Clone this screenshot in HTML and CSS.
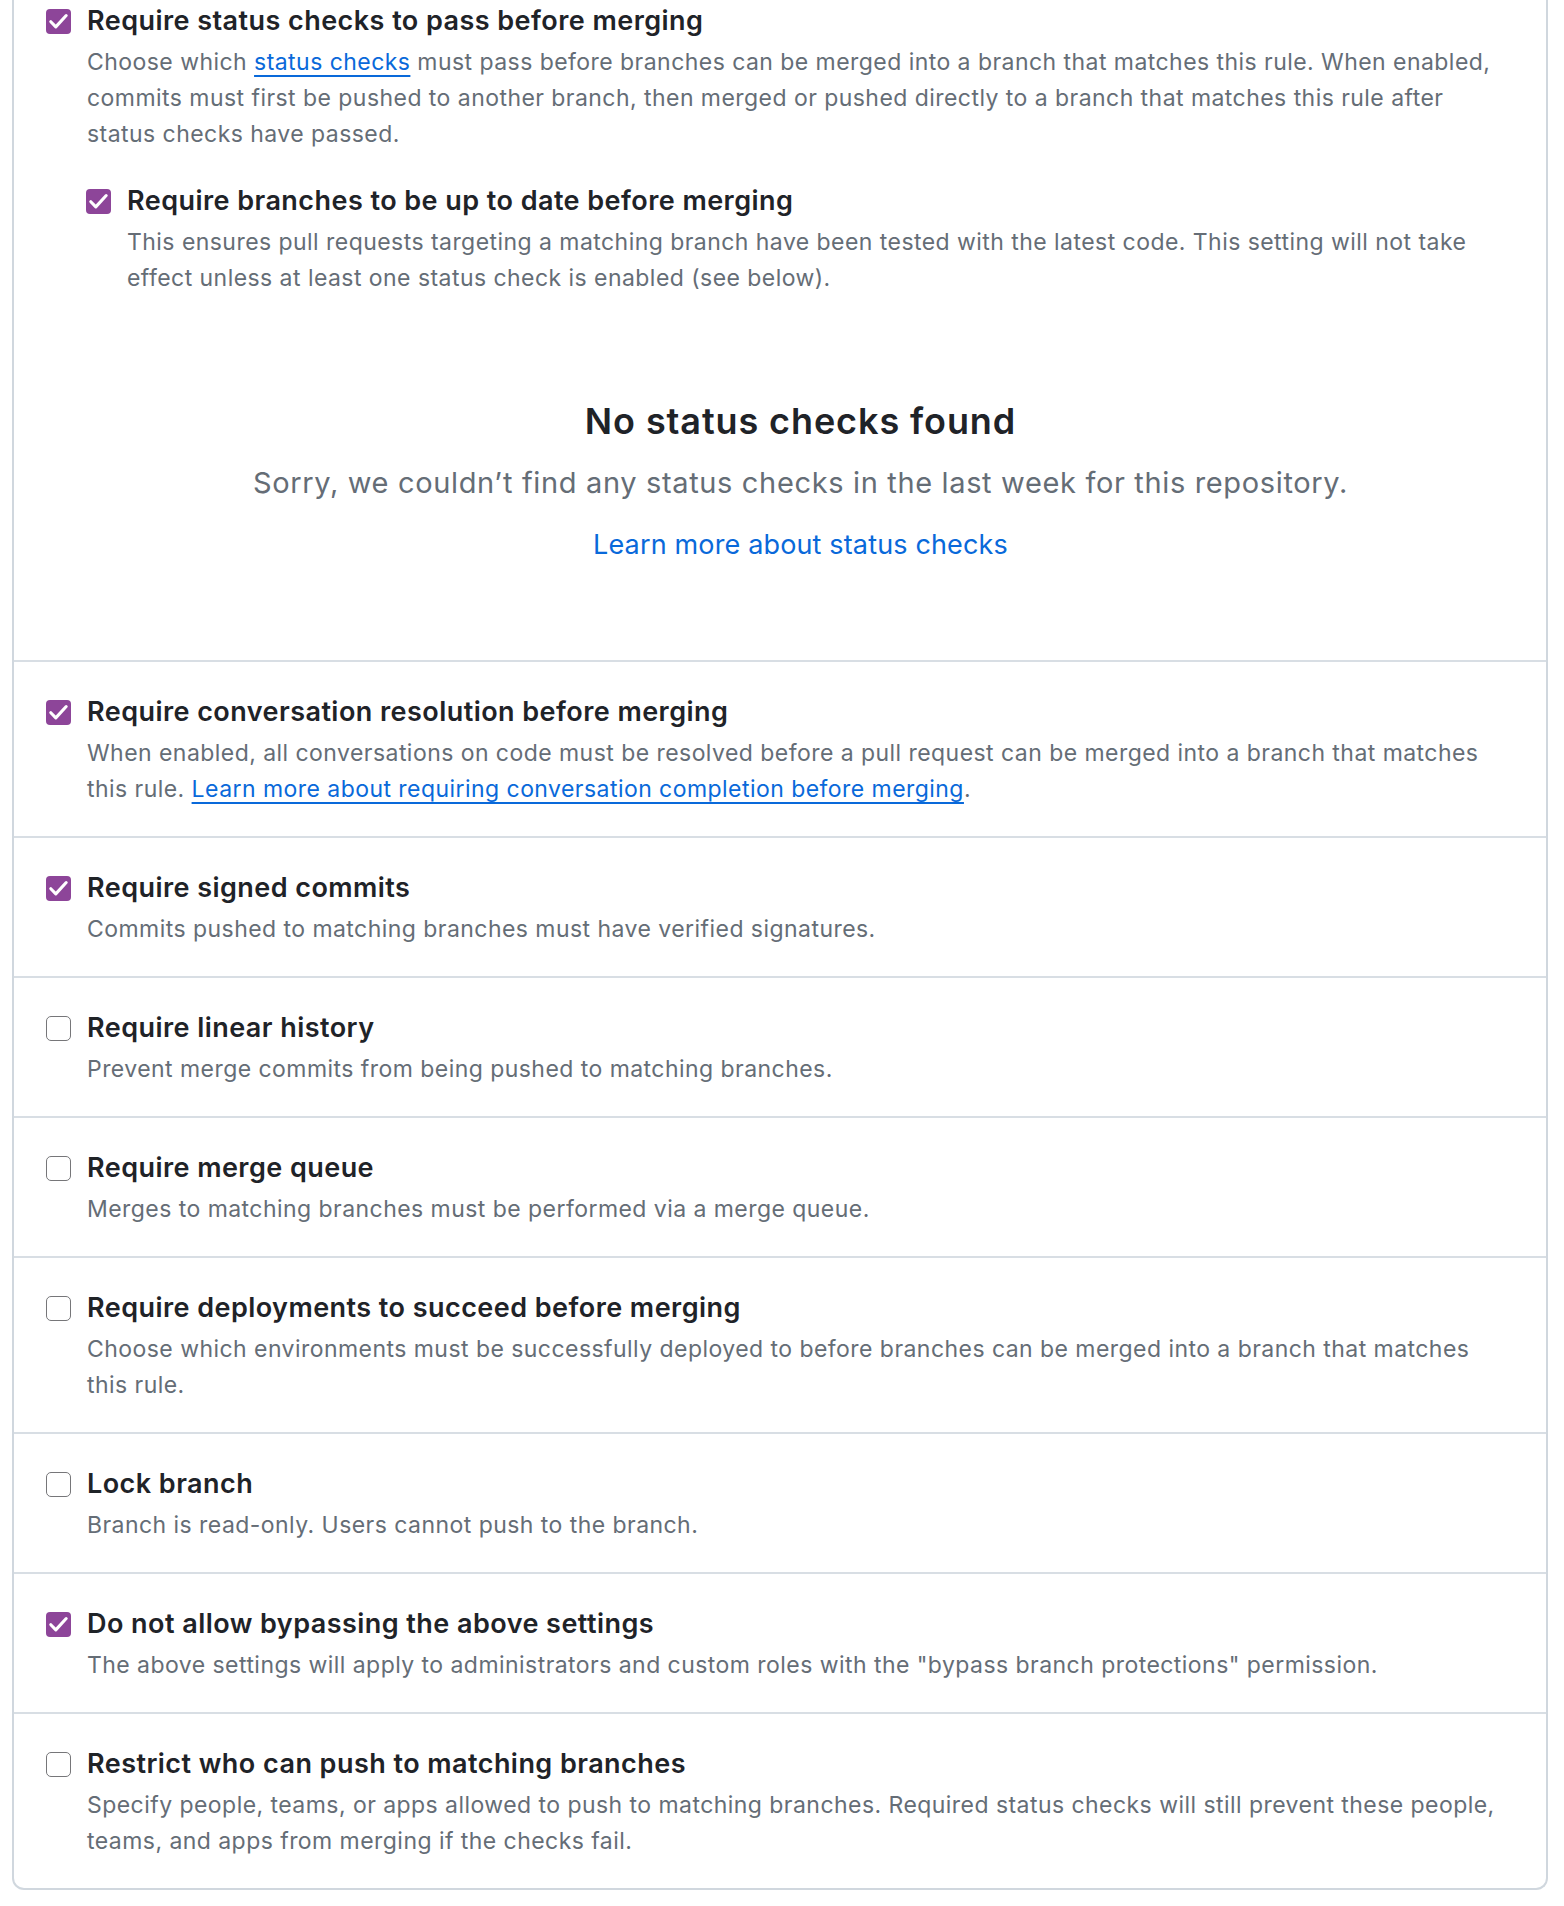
FILE: index.html
```html
<!DOCTYPE html>
<html lang="en">
<head>
<meta charset="utf-8">
<title>Branch protection rules</title>
<link rel="stylesheet" href="styles.css">
</head>
<body>
<div class="box">

  <section class="rule rule--first">
    <span class="cb cb--on"><svg viewBox="0 0 26 26"><path d="M5 13.2 L10.2 18.6 L21 6.8"/></svg></span>
    <div class="rule-main">
      <h3 class="rule-title">Require status checks to pass before merging</h3>
      <p class="rule-desc">Choose which <a class="ul-link" href="#">status checks</a> must pass before branches can be merged into a branch that matches this rule. When enabled, commits must first be pushed to another branch, then merged or pushed directly to a branch that matches this rule after status checks have passed.</p>

      <div class="rule rule--nested">
        <span class="cb cb--on"><svg viewBox="0 0 26 26"><path d="M5 13.2 L10.2 18.6 L21 6.8"/></svg></span>
        <div class="rule-main">
          <h3 class="rule-title">Require branches to be up to date before merging</h3>
          <p class="rule-desc">This ensures pull requests targeting a matching branch have been tested with the latest code. This setting will not take effect unless at least one status check is enabled (see below).</p>
        </div>
      </div>

      <div class="blankslate">
        <h3 class="blankslate-title">No status checks found</h3>
        <p class="blankslate-text">Sorry, we couldn’t find any status checks in the last week for this repository.</p>
        <a class="blankslate-link" href="#">Learn more about status checks</a>
      </div>
    </div>
  </section>

  <section class="rule">
    <span class="cb cb--on"><svg viewBox="0 0 26 26"><path d="M5 13.2 L10.2 18.6 L21 6.8"/></svg></span>
    <div class="rule-main">
      <h3 class="rule-title">Require conversation resolution before merging</h3>
      <p class="rule-desc">When enabled, all conversations on code must be resolved before a pull request can be merged into a branch that matches this rule. <a class="ul-link" href="#">Learn more about requiring conversation completion before merging</a>.</p>
    </div>
  </section>

  <section class="rule">
    <span class="cb cb--on"><svg viewBox="0 0 26 26"><path d="M5 13.2 L10.2 18.6 L21 6.8"/></svg></span>
    <div class="rule-main">
      <h3 class="rule-title">Require signed commits</h3>
      <p class="rule-desc">Commits pushed to matching branches must have verified signatures.</p>
    </div>
  </section>

  <section class="rule">
    <span class="cb"></span>
    <div class="rule-main">
      <h3 class="rule-title">Require linear history</h3>
      <p class="rule-desc">Prevent merge commits from being pushed to matching branches.</p>
    </div>
  </section>

  <section class="rule">
    <span class="cb"></span>
    <div class="rule-main">
      <h3 class="rule-title">Require merge queue</h3>
      <p class="rule-desc">Merges to matching branches must be performed via a merge queue.</p>
    </div>
  </section>

  <section class="rule">
    <span class="cb"></span>
    <div class="rule-main">
      <h3 class="rule-title">Require deployments to succeed before merging</h3>
      <p class="rule-desc">Choose which environments must be successfully deployed to before branches can be merged into a branch that matches this rule.</p>
    </div>
  </section>

  <section class="rule">
    <span class="cb"></span>
    <div class="rule-main">
      <h3 class="rule-title">Lock branch</h3>
      <p class="rule-desc">Branch is read-only. Users cannot push to the branch.</p>
    </div>
  </section>

  <section class="rule">
    <span class="cb cb--on"><svg viewBox="0 0 26 26"><path d="M5 13.2 L10.2 18.6 L21 6.8"/></svg></span>
    <div class="rule-main">
      <h3 class="rule-title">Do not allow bypassing the above settings</h3>
      <p class="rule-desc">The above settings will apply to administrators and custom roles with the "bypass branch protections" permission.</p>
    </div>
  </section>

  <section class="rule">
    <span class="cb"></span>
    <div class="rule-main">
      <h3 class="rule-title">Restrict who can push to matching branches</h3>
      <p class="rule-desc">Specify people, teams, or apps allowed to push to matching branches. Required status checks will still prevent these people, teams, and apps from merging if the checks fail.</p>
    </div>
  </section>

</div>
</body>
</html>
```

FILE: styles.css
```css
* { box-sizing: border-box; }

html, body {
  margin: 0;
  padding: 0;
  background: #ffffff;
}

body {
  font-family: Inter, "Noto Sans", "Liberation Sans", sans-serif;
  color: #1f2328;
}

.box {
  margin-left: 12px;
  width: 1536px;
  border: 2px solid #d0d7de;
  border-top: none;
  border-radius: 0 0 12px 12px;
  background: #ffffff;
}

.rule {
  display: grid;
  grid-template-columns: 26px 1fr;
  column-gap: 15px;
  align-items: start;
  padding: 33px 32px 29px 32px;
  border-top: 2px solid #d8dee4;
}

.rule--first {
  border-top: none;
  padding-top: 4px;
}

.rule--nested {
  border-top: none;
  padding: 0;
  margin-left: -1px;
  margin-top: 32px;
}

.rule-main {
  min-width: 0;
}

.rule-title {
  margin: 0;
  font-size: 27px;
  line-height: 34px;
  font-weight: 600;
  letter-spacing: 0.45px;
  color: #1f2328;
}

.rule-desc {
  margin: 6px 0 0 0;
  font-size: 23px;
  line-height: 36px;
  letter-spacing: 0.45px;
  color: #656d76;
}

.cb {
  display: block;
  width: 25px;
  height: 25px;
  margin-top: 4.5px;
  border: 1.6px solid #767679;
  border-radius: 5px;
  background: #ffffff;
}

.cb--on {
  border: none;
  background: #8d4599;
  border-radius: 4px;
}

.cb svg {
  display: block;
  width: 25px;
  height: 25px;
}

.cb svg path {
  fill: none;
  stroke: #ffffff;
  stroke-width: 3.2;
  stroke-linecap: round;
  stroke-linejoin: round;
}

.ul-link {
  color: #0969da;
  text-decoration: underline;
  text-decoration-thickness: 2px;
  text-underline-offset: 5px;
}

.blankslate {
  margin-top: 39px;
  padding: 64px 0 67px 0;
  text-align: center;
}

.blankslate-title {
  margin: 0;
  font-size: 36px;
  line-height: 44px;
  font-weight: 600;
  letter-spacing: 0.9px;
  color: #1f2328;
}

.blankslate-text {
  margin: 20px 0 0 0;
  font-size: 29px;
  line-height: 39px;
  letter-spacing: 0.65px;
  color: #656d76;
}

.blankslate-link {
  display: inline-block;
  margin-top: 23px;
  font-size: 27px;
  line-height: 39px;
  letter-spacing: 0.15px;
  color: #0969da;
  text-decoration: none;
}
```
